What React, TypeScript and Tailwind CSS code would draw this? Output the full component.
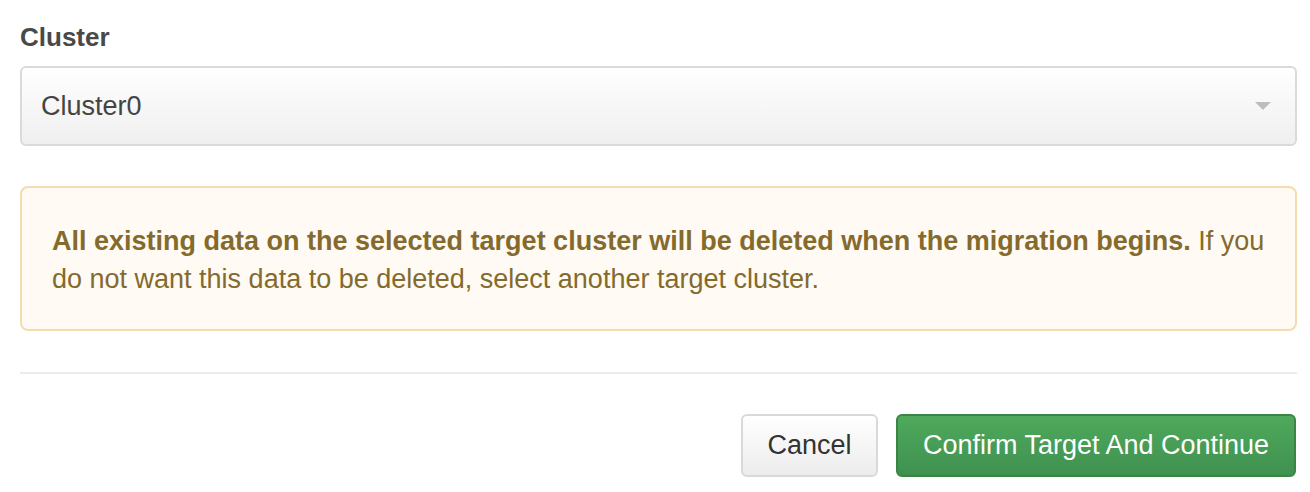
export default function App() {
  return (
    <div className="w-[1310px] h-[492px] bg-white font-['Liberation_Sans',Arial,sans-serif] pl-[20px] pr-[13px] pt-[23px]">
      <label className="block text-[26px] leading-[28px] font-bold text-[#494949]">Cluster</label>

      {/* cluster select */}
      <div className="mt-[15px] h-[80px] flex items-center justify-between rounded-[6px] border-2 border-[#dadada] bg-gradient-to-b from-white to-[#efefef] pl-[19px] pr-[24px]">
        <span className="text-[27px] text-[#444]">Cluster0</span>
        <svg width="16" height="8" viewBox="0 0 16 8">
          <path d="M0 0 L16 0 L8 8 Z" fill="#bdbdbd" />
        </svg>
      </div>

      {/* warning */}
      <div className="mt-[40px] rounded-[8px] border-2 border-[#f2ddb0] bg-[#fffaf3] pl-[30px] pr-[6px] pt-[34px] pb-[31px] text-[27px] leading-[38px] text-[#846a2c]">
        <strong className="font-bold">All existing data on the selected target cluster will be deleted when the migration begins.</strong>{" "}
        If you
        <br />
        do not want this data to be deleted, select another target cluster.
      </div>

      <div className="mt-[41px] h-[2px] bg-[#ececec]" />

      <div className="mt-[40px] flex justify-end gap-[18px] pr-[1px]">
        <button className="h-[63px] w-[137px] rounded-[6px] border-2 border-[#d9d9d9] bg-gradient-to-b from-white to-[#ececec] text-[27px] text-[#333]">
          Cancel
        </button>
        <button className="h-[63px] w-[400px] rounded-[6px] border-2 border-[#3b8446] bg-gradient-to-b from-[#4fa95c] to-[#3f9150] text-[27px] text-white">
          Confirm Target And Continue
        </button>
      </div>
    </div>
  );
}
